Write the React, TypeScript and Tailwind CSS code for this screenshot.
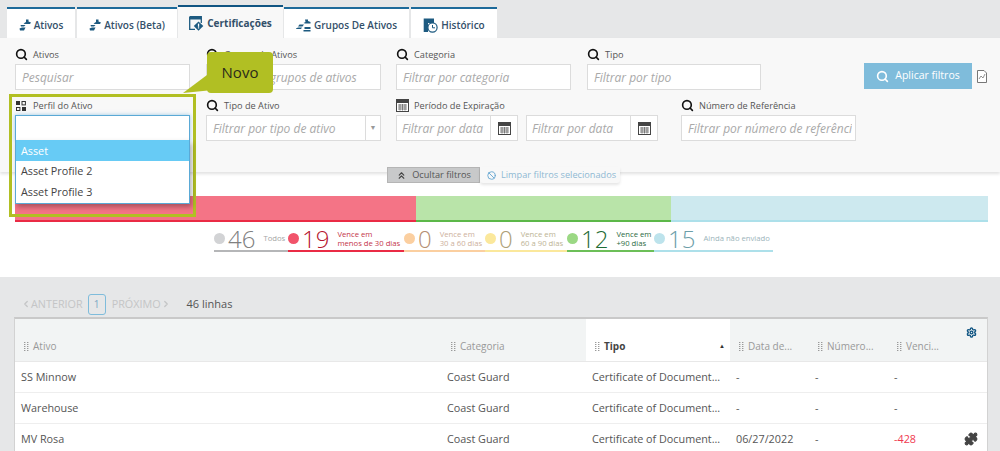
import React from "react";
import { Search, ChevronsUp, Ban, ChevronLeft, ChevronRight, Settings, Puzzle } from "lucide-react";

const AssetIcon = () => (
  <svg width="12" height="12" viewBox="0 0 12 12" className="shrink-0">
    <path d="M7 0.5 H9.5 V2.5 L12 3.6 L11 5 H6 L4.5 4.4 L7 3 Z" fill="#1d5a80" />
    <path d="M1.5 6 H6.5 L5 7.5 H2 Z M0.5 9.5 L3 8.5 H6.5 L5 11.5 H1 Z" fill="#1d5a80" />
  </svg>
);
const CertIcon = () => (
  <svg width="15" height="15" viewBox="0 0 15 15" className="shrink-0">
    <path d="M0.7 0.7 H12.3 V7 M0.7 0.7 V13.3 H6" fill="none" stroke="#1d5a80" strokeWidth="1.3" />
    <path d="M0.7 0.7 H12.3 V3.5 H0.7 Z" fill="#1d5a80" />
    <path d="M9.5 5.5 L14.3 10 L9.5 14.7 L4.8 10 Z" fill="#1d5a80" />
    <rect x="8.9" y="7.6" width="1.3" height="3.2" fill="#fff" />
    <rect x="8.9" y="11.3" width="1.3" height="1.2" fill="#fff" />
  </svg>
);
const GroupIcon = () => (
  <svg width="15" height="13" viewBox="0 0 15 13" className="shrink-0">
    <path d="M9 0.5 H12 V2 L14.5 3 V4.5 H9 L7.5 4 L9.5 3 Z" fill="#1d5a80" />
    <path d="M3.5 5.5 H8 L6.5 7.5 H2 Z M0 9.5 L2 8.5 H6 L5 10 H0 Z" fill="#1d5a80" />
    <path d="M8.5 8 H14.5 V10 H8.5 Z M7.5 11 H14.5 V12.5 H7.5 Z" fill="#1d5a80" />
  </svg>
);
const HistIcon = () => (
  <svg width="15" height="15" viewBox="0 0 15 15" className="shrink-0">
    <path d="M0.7 0.5 H11 V5 H5 V14 H0.7 Z" fill="#1d5a80" />
    <circle cx="9.5" cy="9.5" r="4.6" fill="#fff" stroke="#1d5a80" strokeWidth="1.2" />
    <path d="M9.5 7 V9.8 H12" fill="none" stroke="#1d5a80" strokeWidth="1" />
  </svg>
);
const CalIcon = ({ size = 13 }: { size?: number }) => (
  <svg width={size} height={size} viewBox="0 0 13 13" className="shrink-0">
    <rect x="0.5" y="0.5" width="12" height="12" fill="#fff" stroke="#444" />
    <rect x="0.5" y="0.5" width="12" height="3.5" fill="#444" />
    <path d="M2 6 H11 M2 8 H11 M2 10 H11 M4 5 V11.5 M6.5 5 V11.5 M9 5 V11.5" stroke="#666" strokeWidth="0.8" />
  </svg>
);
const GripIcon = () => (
  <svg width="5" height="10" viewBox="0 0 5 10" className="shrink-0">
    <path d="M0 0.5 H2 M3 0.5 H5 M0 2.5 H2 M3 2.5 H5 M0 4.5 H2 M3 4.5 H5 M0 6.5 H2 M3 6.5 H5 M0 8.5 H2 M3 8.5 H5" stroke="#9a9a9a" strokeWidth="1" strokeDasharray="1 0.6" />
  </svg>
);
const ProfileIcon = () => (
  <svg width="10" height="10" viewBox="0 0 10 10" className="shrink-0">
    <rect x="0" y="0" width="4" height="4" fill="#333" />
    <rect x="6" y="0.5" width="3.4" height="3.4" fill="none" stroke="#333" />
    <rect x="0.5" y="6.5" width="3.4" height="3" fill="none" stroke="#333" />
    <rect x="6" y="6" width="4" height="4" fill="#333" />
  </svg>
);
const ExportIcon = () => (
  <svg width="10" height="13" viewBox="0 0 10 13">
    <path d="M0.5 0.5 H7 L9.5 3 V12.5 H0.5 Z" fill="#fff" stroke="#777" />
    <path d="M2 9 L4 6 L6 8 L8 4" fill="none" stroke="#777" strokeWidth="0.8" />
  </svg>
);

const Tab = ({ icon, label, w }: { icon: React.ReactNode; label: string; w: string }) => (
  <div className={`flex h-[31px] ${w} shrink-0 items-center justify-center gap-[3px] border-t-[2px] border-[#1d6a9a] bg-white pt-[3px] text-[10px] font-semibold text-[#33506a]`}>
    {icon}
    {label}
  </div>
);

const Label = ({ icon, text }: { icon: React.ReactNode; text: string }) => (
  <div className="flex h-[19px] items-center gap-[6px] text-[9.2px] text-[#555]">
    <span className="flex w-[12px] justify-center">{icon}</span>
    {text}
  </div>
);
const SearchI = () => <Search size={13} strokeWidth={3} color="#111" className="shrink-0" />;

const Input = ({ ph }: { ph: string }) => (
  <div className="flex h-[26px] items-center overflow-hidden whitespace-nowrap border-[1.5px] border-[#dcdcdc] bg-white pl-[6px] pr-[3px] pt-[1px] text-[12px] italic text-[#a9a9a9]">
    <span className="min-w-0 flex-1 overflow-hidden">{ph}</span>
  </div>
);

const DateInput = ({ w }: { w: string }) => (
  <div className={`flex h-[26px] ${w} shrink-0 items-center border-[1.5px] border-[#dcdcdc] bg-white text-[12px] italic text-[#a9a9a9]`}>
    <span className="flex-1 whitespace-nowrap pl-[5px] pt-[1px]">Filtrar por data</span>
    <span className="flex h-full w-[27px] shrink-0 items-center justify-center border-l border-[#dcdcdc]">
      <CalIcon />
    </span>
  </div>
);

const Stat = ({ w, dot, num, numC, l1, l2, txt, line }: { w: string; dot: string; num: string; numC: string; l1: string; l2?: string; txt: string; line: string }) => (
  <div className={`flex h-[25px] ${w} shrink-0 items-center border-b-[2px] ${line}`}>
    <span className={`h-[11px] w-[11px] shrink-0 rounded-full ${dot}`} />
    <span className={`ml-[3px] text-[24px] font-light leading-none ${numC}`}>{num}</span>
    <span className={`ml-[8px] whitespace-nowrap text-[7.7px] leading-[9px] ${txt}`}>
      {l1}
      {l2 && <br />}
      {l2}
    </span>
  </div>
);

const cols = ["w-[431px] pl-[6px]", "w-[140px] pl-[2px]", "w-[144px] pl-[6px]", "w-[79px] pl-[6px]", "w-[79px] pl-[6px]", "flex-1 pl-[6px]"];
const Hd = ({ i, text, active }: { i: number; text: string; active?: boolean }) => (
  <div className={`flex h-full shrink-0 items-end pb-[7px] ${cols[i]} ${active ? "bg-white" : ""}`}>
    <div className={`flex items-center gap-[4px] text-[10px] ${active ? "w-full font-bold text-[#444]" : "text-[#999]"}`}>
      <span className="ml-[3px]"><GripIcon /></span>
      {text}
      {active && <span className="ml-auto mr-[5px] text-[6px] text-[#333]">▲</span>}
    </div>
  </div>
);
const Row = ({ a, d, v, puzzle }: { a: string; d: string; v: string; puzzle?: boolean }) => (
  <div className="flex h-[31px] shrink-0 items-center border-b border-[#eeeeee] text-[10.8px] text-[#555]">
    <div className="w-[431px] shrink-0 pl-[6px]">{a}</div>
    <div className="w-[140px] shrink-0 pl-[1px]">Coast Guard</div>
    <div className="w-[144px] shrink-0 pl-[6px]">Certificate of Document...</div>
    <div className="w-[79px] shrink-0 pl-[6px]">{d}</div>
    <div className="w-[79px] shrink-0 pl-[6px]">-</div>
    <div className={`pl-[6px] ${v === "-" ? "" : "text-[#f0394f]"}`}>{v}</div>
    {puzzle && <Puzzle size={14} fill="#444" color="#444" className="ml-auto mr-[9px]" />}
  </div>
);

export default function App() {
  return (
    <div className="relative h-[451px] w-[1000px] overflow-hidden bg-[#e6e7e8] font-['Open_Sans',sans-serif]">
      {/* Tabs */}
      <div className="flex h-[38px] items-end pl-[7px]">
        <Tab w="w-[68px]" icon={<AssetIcon />} label="Ativos" />
        <div className="ml-[2px]"><Tab w="w-[100px]" icon={<AssetIcon />} label="Ativos (Beta)" /></div>
        <div className="relative z-10 ml-[1px] flex h-[33px] w-[105px] shrink-0 items-center justify-center gap-[3px] border-t-[2px] border-[#0f5482] bg-[#f8f8f8] pt-[1px] text-[10px] font-bold text-[#33506a]">
          <CertIcon />
          Certificações
        </div>
        <div className="ml-[1px]"><Tab w="w-[125px]" icon={<GroupIcon />} label="Grupos De Ativos" /></div>
        <div className="ml-[2px]"><Tab w="w-[86px]" icon={<HistIcon />} label="Histórico" /></div>
      </div>

      {/* Filters */}
      <div className="relative h-[134px] bg-[#f8f8f8] px-[15px] pt-[7px] shadow-[0_2px_3px_rgba(0,0,0,0.12)]">
        <div className="flex items-start">
          <div className="mr-[16px] w-[175px] shrink-0">
            <Label icon={<SearchI />} text="Ativos" />
            <Input ph="Pesquisar" />
          </div>
          <div className="mr-[15px] w-[175px] shrink-0">
            <Label icon={<SearchI />} text="Grupos de Ativos" />
            <Input ph="Filtrar por grupos de ativos" />
          </div>
          <div className="mr-[16px] w-[175px] shrink-0">
            <Label icon={<SearchI />} text="Categoria" />
            <Input ph="Filtrar por categoria" />
          </div>
          <div className="w-[174px] shrink-0">
            <Label icon={<SearchI />} text="Tipo" />
            <Input ph="Filtrar por tipo" />
          </div>
          <div className="ml-[103px] mt-[18px] flex shrink-0 items-center gap-[5px]">
            <div className="flex h-[26px] w-[108px] items-center justify-center gap-[6px] bg-[#7fbcdb] text-[10.5px] text-white">
              <Search size={13} strokeWidth={3} color="#fff" />
              Aplicar filtros
            </div>
            <ExportIcon />
          </div>
        </div>
        <div className="mt-[6px] flex items-start">
          <div className="mr-[16px] w-[175px] shrink-0">
            <Label icon={<ProfileIcon />} text="Perfil do Ativo" />
            <div className="h-[26px] border border-[#5aa9d6] bg-white shadow-[0_0_4px_rgba(90,169,214,0.6)]" />
          </div>
          <div className="mr-[15px] w-[175px] shrink-0">
            <Label icon={<SearchI />} text="Tipo de Ativo" />
            <div className="flex h-[26px] items-center border-[1.5px] border-[#dcdcdc] bg-white pl-[6px] text-[12px] italic text-[#a9a9a9]">
              <span className="flex-1 pt-[1px]">Filtrar por tipo de ativo</span>
              <span className="flex h-full w-[15px] items-center justify-center border-l border-[#dcdcdc] text-[7px] not-italic text-[#999]">▼</span>
            </div>
          </div>
          <div className="mr-[23px] w-[262px] shrink-0">
            <Label icon={<CalIcon />} text="Período de Expiração" />
            <div className="flex gap-[8px]">
              <DateInput w="w-[122px]" />
              <DateInput w="w-[132px]" />
            </div>
          </div>
          <div className="w-[175px] shrink-0">
            <Label icon={<SearchI />} text="Número de Referência" />
            <Input ph="Filtrar por número de referência" />
          </div>
        </div>

        {/* Hide / clear */}
        <div className="absolute left-[387px] top-[129px] flex h-[16px] items-center">
          <div className="flex h-full w-[93px] items-center justify-center gap-[5px] border border-[#b5b5b5] bg-[#c8c9ca] text-[9.2px] text-[#555]">
            <ChevronsUp size={11} strokeWidth={2.5} color="#444" />
            Ocultar filtros
          </div>
          <div className="flex h-full items-center gap-[5px] rounded-b-[3px] bg-[#f8f8f8] pl-[7px] pr-[4px] text-[9.2px] text-[#8fb8d3] shadow-[0_2px_3px_rgba(0,0,0,0.1)]">
            <Ban size={9} color="#6aa9d2" strokeWidth={2.5} />
            Limpar filtros selecionados
          </div>
        </div>
      </div>

      {/* Chart band */}
      <div className="h-[105px] bg-white px-[15px] pt-[24px]">
        <div className="flex h-[26px] w-[973px]">
          <div className="w-[401px] border-b-[2px] border-[#ea2b45] bg-[#f47486]" />
          <div className="w-[255px] border-b-[2px] border-[#5cb849] bg-[#b9e4a9]" />
          <div className="flex-1 border-b-[2px] border-[#ade0ea] bg-[#cde9ef]" />
        </div>
        <div className="ml-[199px] mt-[5px] flex">
          <Stat w="w-[74px]" dot="bg-[#d2d3d5]" num="46" numC="text-[#808080]" l1="Todos" txt="text-[#a5a5a5]" line="border-[#b5b6b8]" />
          <Stat w="w-[116px]" dot="bg-[#f1536a]" num="19" numC="text-[#b5142e]" l1="Vence em" l2="menos de 30 dias" txt="text-[#c4354a]" line="border-[#ea2b45]" />
          <Stat w="w-[81px]" dot="bg-[#fbcfa0]" num="0" numC="text-[#b58f73]" l1="Vence em" l2="30 a 60 dias" txt="text-[#cdb09c]" line="border-[#fbcfa0]" />
          <Stat w="w-[82px]" dot="bg-[#fbe89c]" num="0" numC="text-[#ada077]" l1="Vence em" l2="60 a 90 dias" txt="text-[#bcb394]" line="border-[#fbe89c]" />
          <Stat w="w-[87px]" dot="bg-[#9bd884]" num="12" numC="text-[#1f6b35]" l1="Vence em" l2="+90 dias" txt="text-[#2c6b3f]" line="border-[#6cbf58]" />
          <Stat w="w-[119px]" dot="bg-[#bde3ec]" num="15" numC="text-[#6c9ea9]" l1="Ainda não enviado" txt="text-[#9cb4bb]" line="border-[#ade0ea]" />
        </div>
      </div>

      {/* Pager */}
      <div className="flex h-[40px] items-start pl-[21px] pt-[17px]">
        <div className="flex h-[20px] items-center text-[10.8px] text-[#c4c5c6]">
          <ChevronLeft size={10} strokeWidth={3} />
          ANTERIOR
        </div>
        <div className="ml-[5px] flex h-[21px] w-[18px] items-center justify-center rounded-[3px] border border-[#7fbcdb] text-[10px] text-[#7fa9c4]">1</div>
        <div className="ml-[6px] flex h-[20px] items-center text-[10.8px] text-[#c4c5c6]">
          PRÓXIMO
          <ChevronRight size={10} strokeWidth={3} />
        </div>
        <div className="ml-[16px] flex h-[20px] items-center text-[11px] text-[#555]">46 linhas</div>
      </div>

      {/* Table */}
      <div className="ml-[14px] flex h-[140px] w-[974px] flex-col border-x border-t-2 border-[#c9c9c9] border-x-[#d2d2d2] bg-white">
        <div className="relative flex h-[43px] shrink-0 items-stretch border-b border-[#e8e8e8] bg-[#f2f4f4]">
          <Hd i={0} text="Ativo" />
          <Hd i={1} text="Categoria" />
          <Hd i={2} text="Tipo" active />
          <Hd i={3} text="Data de..." />
          <Hd i={4} text="Número..." />
          <Hd i={5} text="Venci..." />
          <Settings size={11} strokeWidth={3} color="#0f5482" className="absolute right-[10px] top-[8px]" />
        </div>
        <Row a="SS Minnow" d="-" v="-" />
        <Row a="Warehouse" d="-" v="-" />
        <Row a="MV Rosa" d="06/27/2022" v="-428" puzzle />
      </div>

      {/* Highlight frame + dropdown overlay */}
      <div className="absolute left-[9px] top-[94px] h-[123px] w-[187px] border-[3px] border-[#b1bf23]" />
      <div className="absolute left-[15px] top-[140px] w-[175px] border border-t-0 border-[#5aa9d6] bg-white text-[10.8px] text-[#444] shadow-[2px_3px_5px_rgba(0,0,0,0.3)]">
        <div className="flex h-[21px] items-center bg-[#67cbf5] pl-[5px] pt-[1px] text-white">Asset</div>
        <div className="flex h-[21px] items-center pl-[5px]">Asset Profile 2</div>
        <div className="flex h-[21px] items-center pl-[5px]">Asset Profile 3</div>
      </div>

      {/* Callout */}
      <svg width="35" height="28" viewBox="0 0 35 28" className="absolute left-[180px] top-[70px]">
        <path d="M27 5 L3 23 L33 20 Z" fill="#b1bf23" />
      </svg>
      <div className="absolute left-[207px] top-[52px] flex h-[41px] w-[66px] items-center justify-center rounded-[4px] bg-[#b1bf23] text-[15px] text-[#2b2b1a]">Novo</div>
    </div>
  );
}
